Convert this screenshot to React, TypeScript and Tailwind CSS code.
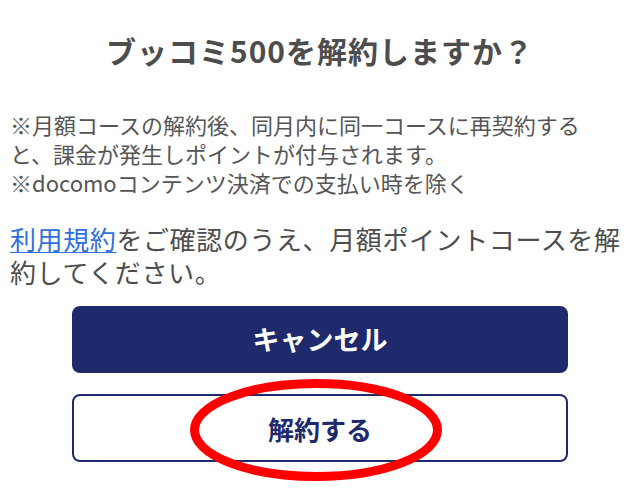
import React from "react";

export default function App() {
  const font = { fontFamily: '"Noto Sans CJK JP", "Noto Sans", sans-serif' };
  return (
    <div className="relative w-[640px] h-[497px] bg-white overflow-hidden" style={font}>
      <div className="flex flex-col pt-[30px]">
        <h1 className="text-center text-[30px] leading-[40px] tracking-[1px] font-bold text-[#4d4d4d]">
          ブッコミ500を解約しますか？
        </h1>
        <div className="mt-[40px] px-[10px] text-[22px] leading-[29px] text-[#555555]">
          <p>※月額コースの解約後、同月内に同一コースに再契約する</p>
          <p>と、課金が発生しポイントが付与されます。</p>
          <p>※docomoコンテンツ決済での支払い時を除く</p>
        </div>
        <p className="mt-[25px] px-[10px] text-[26px] leading-[33px] tracking-[0.6px] text-[#4d4d4d]">
          <a className="text-[#2f6fde] underline underline-offset-[2px] decoration-[1px]">利用規約</a>
          をご確認のうえ、月額ポイントコースを解約してください。
        </p>
        <div className="mt-[18px] mx-[72px] flex flex-col gap-[21px]">
          <button className="h-[67px] rounded-[8px] bg-[#1e2a6b] text-white text-[27px] font-bold flex items-center justify-center">
            キャンセル
          </button>
          <button className="h-[68px] rounded-[8px] border-2 border-[#1e2a6b] bg-white text-[#1e2a6b] text-[26px] font-bold flex items-center justify-center">
            解約する
          </button>
        </div>
      </div>
      <svg className="absolute left-0 top-0 pointer-events-none" width="640" height="497">
        <ellipse cx="316" cy="430" rx="121.5" ry="46.5" fill="none" stroke="#ff0000" strokeWidth="9" />
      </svg>
    </div>
  );
}
